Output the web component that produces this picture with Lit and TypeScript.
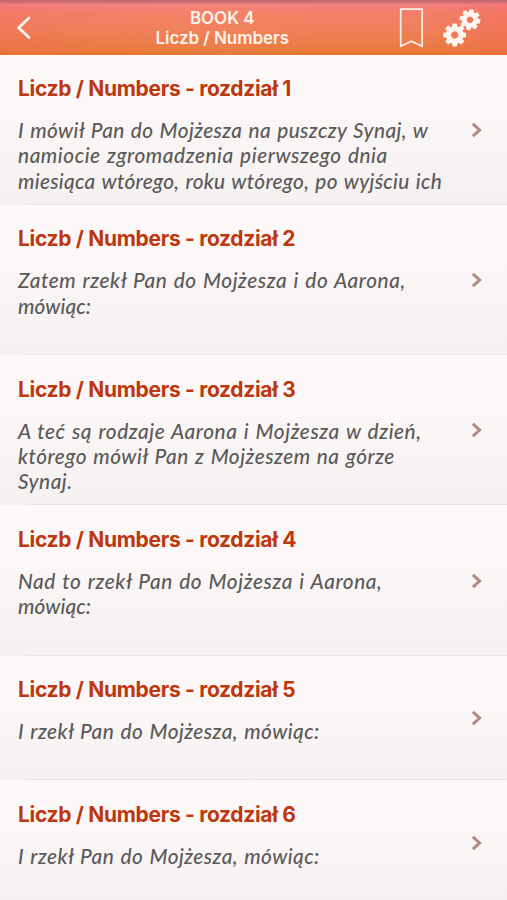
import { LitElement, html, css, svg } from "lit";
import { customElement, property } from "lit/decorators.js";

interface Line { text: string; tracking: number }
interface Chapter { n: number; lines: Line[]; short?: boolean }

const BOOK = "Liczb / Numbers";

const chapters: Chapter[] = [
  { n: 1, lines: [
    { text: "I mówił Pan do Mojżesza na puszczy Synaj, w", tracking: 0.38 },
    { text: "namiocie zgromadzenia pierwszego dnia", tracking: 0.56 },
    { text: "miesiąca wtórego, roku wtórego, po wyjściu ich", tracking: 0.31 } ] },
  { n: 2, lines: [
    { text: "Zatem rzekł Pan do Mojżesza i do Aarona,", tracking: 0.55 },
    { text: "mówiąc:", tracking: 0.1 } ] },
  { n: 3, lines: [
    { text: "A teć są rodzaje Aarona i Mojżesza w dzień,", tracking: 0.56 },
    { text: "którego mówił Pan z Mojżeszem na górze", tracking: 0.49 },
    { text: "Synaj.", tracking: 0.5 } ] },
  { n: 4, lines: [
    { text: "Nad to rzekł Pan do Mojżesza i Aarona,", tracking: 0.58 },
    { text: "mówiąc:", tracking: 0.1 } ] },
  { n: 5, short: true, lines: [{ text: "I rzekł Pan do Mojżesza, mówiąc:", tracking: 0.45 }] },
  { n: 6, short: true, lines: [{ text: "I rzekł Pan do Mojżesza, mówiąc:", tracking: 0.45 }] },
];

const gear = (cx: number, cy: number, r: number, turn: number) => svg`
  <g transform="translate(${cx} ${cy}) rotate(${turn}) scale(${r / 11.3})">
    <circle r="6.1" fill="none" stroke="#fff6f1" stroke-width="5"></circle>
    ${[0, 45, 90, 135, 180, 225, 270, 315].map(
      (a) => svg`<path transform="rotate(${a})" fill="#fff6f1" d="M-2.8 -7.6L-2.3 -10.7Q-2.2 -11.3 -1.6 -11.3H1.6Q2.2 -11.3 2.3 -10.7L2.8 -7.6Z"></path>`
    )}
  </g>`;

@customElement("top-bar")
export class TopBar extends LitElement {
  static styles = css`
    :host {
      display: grid;
      grid-template-columns: 157px auto 1fr;
      box-sizing: border-box;
      height: 54.5px;
      padding-left: 0;
      color: #fff3ec;
      background:
        linear-gradient(to bottom, #c26a6f 0, #cc6c70 2px, rgba(240, 120, 120, 0) 4.5px),
        linear-gradient(to right, rgba(240, 90, 90, 0.16), rgba(240, 90, 90, 0) 20%, rgba(255, 150, 110, 0.12) 45%, rgba(240, 90, 90, 0) 62%, rgba(240, 90, 90, 0) 84%, rgba(245, 90, 90, 0.28)),
        linear-gradient(to bottom, #f5838a 3px, #f37f6a 11px, #f07f5a 30px, #ea7a41 49px, #e6762f 54px);
    }
    .titles {
      padding-top: 8px;
      margin-left: -1.5px;
      text-align: center;
      font: 600 17px/20px Inter, sans-serif;
      letter-spacing: -0.05px;
      white-space: nowrap;
    }
    .back { margin: 15px 0 0 15px; }
    .tools { display: flex; justify-content: flex-end; padding: 7px 26px 0 0; gap: 19px; }
    svg { display: block; }
  `;
  render() {
    return html`
      <svg class="back" width="18" height="26" viewBox="0 0 18 26" fill="none" stroke="#fff6f1" stroke-width="2.7" stroke-linecap="round" stroke-linejoin="round">
        <path d="M14 3L3.6 12.7L14 22.6"></path>
      </svg>
      <div class="titles"><div>BOOK 4</div><div>${BOOK}</div></div>
      <div class="tools">
        <svg width="25" height="42" viewBox="0 0 25 42" fill="none" stroke="#fff0e8" stroke-width="1.7">
          <path d="M1.7 2.2H23.1V39.2L12.4 34.2L1.7 39.2Z"></path>
        </svg>
        <svg width="38" height="40" viewBox="0 0 38 40">${gear(27, 12.7, 10.4, 10)}${gear(11.7, 28, 11.4, 0)}</svg>
      </div>
    `;
  }
}

@customElement("chapter-row")
export class ChapterRow extends LitElement {
  @property({ attribute: false }) chapter!: Chapter;
  static styles = css`
    :host { display: block; background: linear-gradient(to bottom, #fcf9f8, #faf7f6 40%, #f5f1f1); }
    .row { display: flex; align-items: center; justify-content: space-between; box-sizing: border-box; height: 150.3px; padding: 0 24px 0 18px; }
    .row.short { height: 124.6px; }
    .text { align-self: flex-start; padding-top: 21.5px; }
    .title { margin: 0; font: 650 21px/26px Inter, sans-serif; letter-spacing: -0.32px; color: #bd370f; white-space: nowrap; }
    .verse { margin: 15px 0 0; font: italic 500 20.8px/25.3px Lato, sans-serif; word-spacing: 1px; color: #5c5a59; white-space: nowrap; }
    .line { display: block; }
    .rule { height: 1px; margin: -1px 0 0 26px; background: #ebe6e6; }
    .chev { flex: none; }
  `;
  render() {
    const { n, lines, short } = this.chapter;
    return html`
      <div class="row ${short ? "short" : ""}">
        <div class="text">
          <h2 class="title">${BOOK} - rozdział ${n}</h2>
          <p class="verse">
            ${lines.map((l) => html`<span class="line" style="letter-spacing:${l.tracking}px">${l.text}</span>`)}
          </p>
        </div>
        <svg class="chev" width="12" height="16" viewBox="0 0 12 16" fill="none" stroke="#b08b83" stroke-width="3">
          <path d="M1.9 1.8L8.6 8L1.9 14.2"></path>
        </svg>
      </div>
      <div class="rule"></div>
    `;
  }
}

@customElement("app-root")
export class AppRoot extends LitElement {
  static styles = css`
    :host { display: block; height: 900px; overflow: hidden; background: #fbf8f7; }
  `;
  render() {
    return html`
      <top-bar></top-bar>
      <main>${chapters.map((c) => html`<chapter-row .chapter=${c}></chapter-row>`)}</main>
    `;
  }
}
